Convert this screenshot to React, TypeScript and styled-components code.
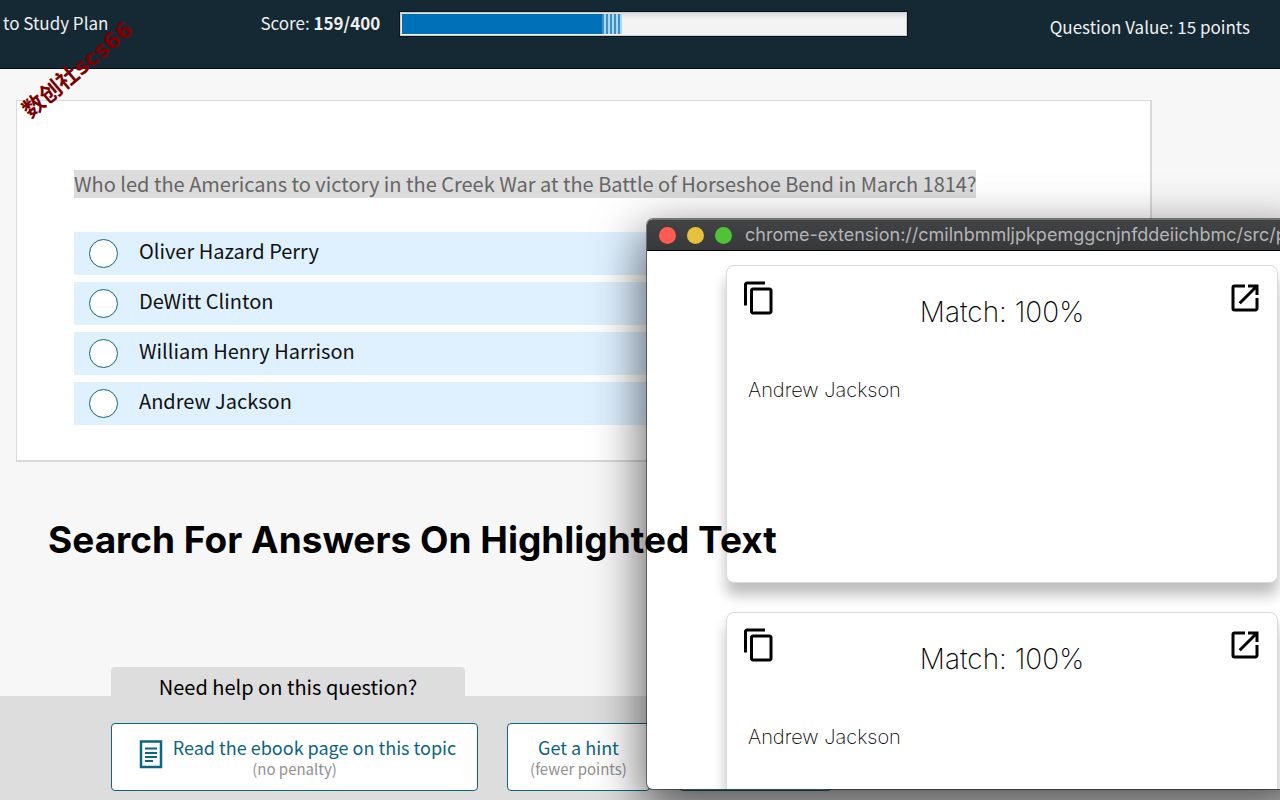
import React from "react";
import styled, { createGlobalStyle } from "styled-components";
import { MdContentCopy, MdOpenInNew } from "react-icons/md";

const GlobalStyle = createGlobalStyle`
  *, *::before, *::after { box-sizing: border-box; }
  body { margin: 0; background: #f7f7f7; }
  button { font: inherit; cursor: pointer; }
`;

const sourceSans = `"Source Sans Pro", "Noto Sans CJK SC", sans-serif`;
const system = `Inter, "Liberation Sans", sans-serif`;

const Page = styled.div`
  position: relative;
  display: flex;
  flex-direction: column;
  min-height: 100vh;
  overflow: hidden;
  font-family: ${sourceSans};
  color: #111;
`;

const Header = styled.header`
  display: flex;
  align-items: flex-start;
  height: 69px;
  padding: 12px 30px 0 3px;
  background: #152934;
  border-bottom: 1px solid #050a0d;
  color: #f0f0f0;
  font-size: 17px;
  line-height: 22px;
  white-space: nowrap;
`;

const BackLink = styled.a`
  color: inherit;
  text-decoration: none;
`;

const Score = styled.div`
  margin-left: 152px;
`;

const Track = styled.div`
  display: flex;
  flex: 0 1 507px;
  height: 24px;
  margin-left: 20px;
  padding: 1px;
  border: 1px solid #c5ccd2;
  background: linear-gradient(#dcdcdc, #f3f3f3 6px);
  box-shadow: 0 0 0 1px #0a1419;
`;

const Fill = styled.div`
  background: #0070b8;
`;

const Pending = styled.div`
  width: 20px;
  background: repeating-linear-gradient(90deg, #3d8fc4 0 2px, #a9d8f2 2px 4px);
`;

const Value = styled.div`
  margin-left: auto;
  padding-top: 4px;
`;

const QuestionCard = styled.main`
  margin: 31px 128px 0 16px;
  padding: 69px 57px 35px;
  background: #fff;
  border: 1px solid #d9d9d9;
  border-width: 1px 2px 2px 1px;
`;

const Question = styled.h1`
  margin: 0 0 34px;
  font-size: 20px;
  font-weight: 400;
  line-height: 28px;
  color: #666;
`;

const Highlight = styled.mark`
  display: inline-block;
  background: #dcdcdc;
  color: inherit;
`;

const Options = styled.div`
  display: grid;
  gap: 7px;
`;

const Option = styled.label`
  display: flex;
  align-items: center;
  gap: 21px;
  height: 43px;
  padding: 0 15px;
  background: #dff1ff;
  font-size: 20px;
  line-height: 28px;
`;

const Radio = styled.input`
  appearance: none;
  width: 29px;
  height: 29px;
  margin: 0;
  border: 1px solid #0d6580;
  border-radius: 50%;
  background: #fff;
`;

const OptionText = styled.span`
  padding-bottom: 6px;
`;

const HelpArea = styled.section`
  margin-top: auto;
`;

const HelpTab = styled.h2`
  width: 354px;
  height: 29px;
  margin: 0 0 0 111px;
  padding-top: 6px;
  border-radius: 4px 4px 0 0;
  background: #ddd;
  color: #000;
  font-size: 20px;
  font-weight: 400;
  line-height: 28px;
  text-align: center;
`;

const HelpBar = styled.div`
  display: flex;
  gap: 29px;
  padding: 27px 0 9px 111px;
  background: #ddd;
`;

const HelpButton = styled.button<{ $width: number }>`
  position: relative;
  display: flex;
  flex-direction: column;
  align-items: center;
  flex: none;
  width: ${(p) => p.$width}px;
  height: 68px;
  padding: 11px 22px;
  border: 1px solid #0d6580;
  border-radius: 4px;
  background: #fff;
  color: #0d6580;
  white-space: nowrap;

  svg {
    position: absolute;
    top: 15px;
    left: 27px;
  }
`;

const HelpLabel = styled.span<{ $indent?: boolean }>`
  padding-left: ${(p) => (p.$indent ? 40 : 0)}px;
  font-size: 18px;
  line-height: 24px;
`;

const HelpNote = styled.span`
  color: #919191;
  font-size: 15px;
  line-height: 20px;
`;

const Popup = styled.aside`
  position: absolute;
  top: 219px;
  left: 647px;
  right: -24px;
  height: 570px;
  overflow: hidden;
  border-radius: 6px;
  background: #fff;
  box-shadow: 0 0 0 1px rgba(0, 0, 0, 0.45), 0 18px 50px 4px rgba(0, 0, 0, 0.62);
  font-family: ${system};
  color: #000;
`;

const TitleBar = styled.div`
  display: flex;
  align-items: center;
  gap: 11px;
  height: 32px;
  padding-left: 12px;
  border-top: 1px solid #6f7171;
  border-bottom: 1px solid #000;
  background: linear-gradient(#414344, #363839);
`;

const Light = styled.button<{ $color: string }>`
  flex: none;
  width: 17px;
  height: 17px;
  padding: 0;
  border: 0;
  border-radius: 50%;
  background: ${(p) => p.$color};
`;

const Address = styled.span`
  padding-left: 2px;
  color: #b4b5b6;
  font-size: 18px;
  line-height: 24px;
  white-space: nowrap;
`;

const Results = styled.div`
  display: grid;
  gap: 29px;
  padding: 14px 26px 0 79px;
`;

const Result = styled.article`
  height: 318px;
  padding: 14px;
  border: 1px solid #d8d9da;
  border-radius: 8px;
  background: #fff;
  box-shadow: 0 12px 14px rgba(0, 0, 0, 0.26);
`;

const ResultHead = styled.div`
  display: flex;
  justify-content: space-between;
  height: 96px;
`;

const IconButton = styled.button`
  display: block;
  width: 36px;
  height: 36px;
  padding: 0;
  border: 0;
  background: none;
  color: #000;
`;

const Match = styled.h3`
  margin: 14px 0 0;
  font-size: 28px;
  font-weight: 200;
  line-height: 36px;
`;

const Answer = styled.p`
  margin: 0;
  padding-left: 7px;
  font-size: 20px;
  font-weight: 200;
  line-height: 28px;
`;

const Caption = styled.p`
  position: absolute;
  top: 518px;
  left: 48px;
  margin: 0;
  color: #000;
  font-family: ${system};
  font-size: 37px;
  font-weight: 700;
  line-height: 44px;
  white-space: nowrap;
`;

const Watermark = styled.div`
  position: absolute;
  top: 56px;
  left: 10px;
  transform: rotate(-40deg);
  color: #7b0000;
  font-family: "DejaVu Sans", "Noto Sans CJK SC", sans-serif;
  font-size: 22px;
  font-weight: 700;
  line-height: 28px;
  white-space: nowrap;
`;

const options = ["Oliver Hazard Perry", "DeWitt Clinton", "William Henry Harrison", "Andrew Jackson"];
const results = ["Andrew Jackson", "Andrew Jackson"];

const PageIcon = () => (
  <svg width="24" height="30" viewBox="0 0 24 30" fill="none" stroke="#0d6580" aria-hidden="true">
    <rect x="2" y="2.500" width="20" height="25.500" strokeWidth="2.500" />
    <path d="M6 9.500h12M6 14h12M6 18h12M6 22h8" strokeWidth="1.900" />
  </svg>
);

export default function App() {
  return (
    <Page>
      <GlobalStyle />
      <Header>
        <BackLink href="#plan">to Study Plan</BackLink>
        <Score>
          Score: <strong>159/400</strong>
        </Score>
        <Track role="progressbar" aria-label="Score" aria-valuenow={159} aria-valuemax={400}>
          <Fill style={{ width: `${(159 / 400) * 100}%` }} />
          <Pending />
        </Track>
        <Value>Question Value: 15 points</Value>
      </Header>

      <QuestionCard>
        <Question>
          <Highlight>Who led the Americans to victory in the Creek War at the Battle of Horseshoe Bend in March 1814?</Highlight>
        </Question>
        <Options role="radiogroup">
          {options.map((text) => (
            <Option key={text}>
              <Radio type="radio" name="answer" />
              <OptionText>{text}</OptionText>
            </Option>
          ))}
        </Options>
      </QuestionCard>

      <HelpArea>
        <HelpTab>Need help on this question?</HelpTab>
        <HelpBar>
          <HelpButton $width={367}>
            <PageIcon />
            <HelpLabel $indent>Read the ebook page on this topic</HelpLabel>
            <HelpNote>(no penalty)</HelpNote>
          </HelpButton>
          <HelpButton $width={143}>
            <HelpLabel>Get a hint</HelpLabel>
            <HelpNote>(fewer points)</HelpNote>
          </HelpButton>
          <HelpButton $width={153} aria-label="More help" />
        </HelpBar>
      </HelpArea>

      <Popup>
        <TitleBar>
          <Light $color="#ff5b52" aria-label="Close" />
          <Light $color="#e6c13d" aria-label="Minimize" />
          <Light $color="#50c238" aria-label="Zoom" />
          <Address>chrome-extension://cmilnbmmljpkpemggcnjnfddeiichbmc/src/popup</Address>
        </TitleBar>
        <Results>
          {results.map((text, i) => (
            <Result key={i}>
              <ResultHead>
                <IconButton aria-label="Copy">
                  <MdContentCopy size={36} />
                </IconButton>
                <Match>Match: 100%</Match>
                <IconButton aria-label="Open in new window">
                  <MdOpenInNew size={36} />
                </IconButton>
              </ResultHead>
              <Answer>{text}</Answer>
            </Result>
          ))}
        </Results>
      </Popup>

      <Caption>Search For Answers On Highlighted Text</Caption>
      <Watermark>数创社scs66</Watermark>
    </Page>
  );
}
